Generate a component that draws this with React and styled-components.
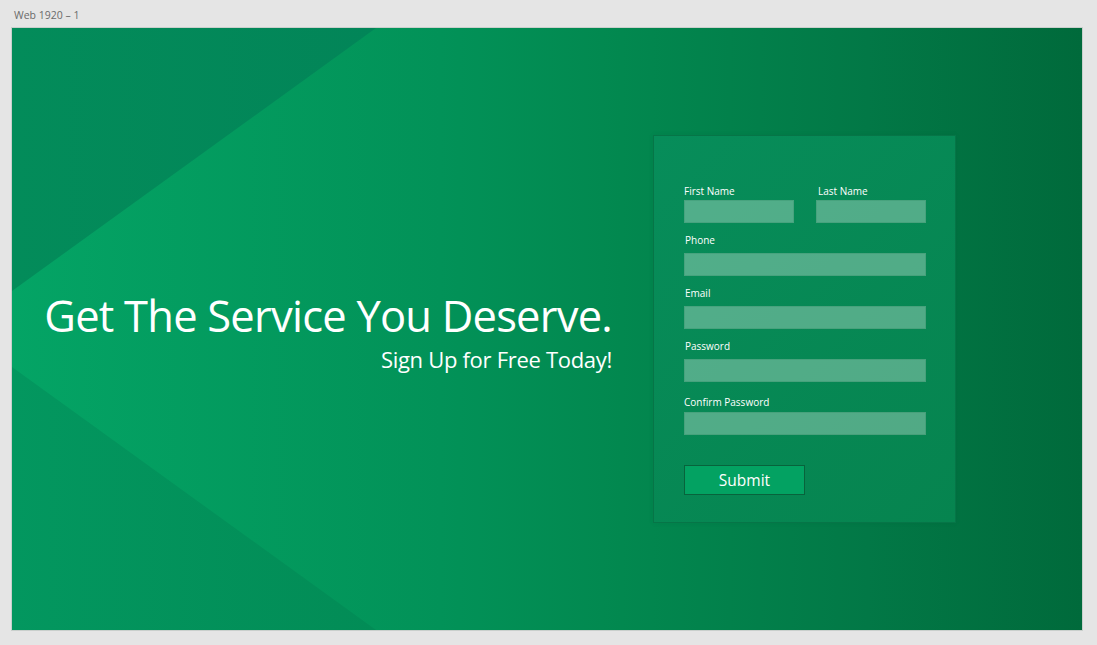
import React from "react";
import styled, { createGlobalStyle } from "styled-components";

const GlobalStyle = createGlobalStyle`
  html, body {
    margin: 0;
    padding: 0;
    background: #e5e5e5;
  }
  body {
    font-family: "Open Sans", "Noto Sans", sans-serif;
  }
`;

const Page = styled.div`
  width: 1097px;
  height: 645px;
  padding: 8px 14px 0 11px;
  box-sizing: border-box;
  display: flex;
  flex-direction: column;
`;

const BoardTitle = styled.div`
  font-size: 10.5px;
  color: #6a6a6a;
  height: 19px;
  padding-left: 3px;
  line-height: 14px;
`;

const Artboard = styled.main`
  position: relative;
  width: 1072px;
  height: 604px;
  box-sizing: border-box;
  border: 1px solid #c9cfcc;
  overflow: hidden;
  display: flex;
  align-items: center;
  background: linear-gradient(
    90deg,
    #04a465 0%,
    #029258 40%,
    #02884f 57%,
    #027846 80%,
    #006a3b 100%
  );

  /* darker wedges in the left corners */
  &::before,
  &::after {
    content: "";
    position: absolute;
    left: 0;
    width: 364px;
    height: 263px;
  }
  &::before {
    top: 0;
    background: linear-gradient(90deg, #038c5a, #028558);
    clip-path: polygon(0 0, 100% 0, 0 100%);
  }
  &::after {
    bottom: 0;
    background: linear-gradient(90deg, #03975f, #028c56);
    clip-path: polygon(0 0, 100% 100%, 0 100%);
  }
`;

const Hero = styled.section`
  position: relative;
  z-index: 1;
  width: 568px;
  margin-left: 32px;
  margin-top: 4px;
  text-align: right;
  color: #ffffff;
`;

const Headline = styled.h1`
  margin: 0;
  font-weight: 400;
  font-size: 43.5px;
  letter-spacing: -0.78px;
  line-height: 56px;
  white-space: nowrap;
`;

const Tagline = styled.p`
  margin: 0;
  font-size: 22px;
  letter-spacing: -0.3px;
  line-height: 31px;
`;

const Card = styled.form`
  position: relative;
  z-index: 1;
  margin-left: 41px;
  width: 303px;
  height: 388px;
  box-sizing: border-box;
  padding: 48px 29px 0 30px;
  background: linear-gradient(135deg, #078d5a 0%, #06844f 100%);
  border: 1px solid #067547;
  box-shadow: 0 0 6px rgba(0, 0, 0, 0.05);
  display: flex;
  flex-direction: column;
`;

const Row = styled.div`
  display: grid;
  grid-template-columns: 1fr 1fr;
  column-gap: 22px;
  margin-bottom: 10px;
`;

const Field = styled.label`
  display: flex;
  flex-direction: column;
  min-width: 0;
  margin-bottom: ${(p) => p.$after ?? 10}px;
`;

const FieldLabel = styled.span`
  font-size: 10px;
  color: #ffffff;
  line-height: 14px;
  margin-bottom: ${(p) => p.$space ?? 6}px;
  padding-left: ${(p) => p.$indent ?? 1}px;
`;

const Input = styled.input`
  width: 100%;
  height: 23px;
  box-sizing: border-box;
  margin: 0;
  border: 1px solid rgba(0, 90, 50, 0.12);
  background: rgba(255, 255, 255, 0.3);
  outline: none;
  padding: 0 6px;
  color: #fff;
  font-family: inherit;
`;

const Submit = styled.button`
  width: 121px;
  height: 30px;
  margin-top: 20px;
  background: #03a262;
  border: 1px solid #08633c;
  color: #ffffff;
  font-family: inherit;
  font-size: 15.5px;
  line-height: 26px;
  padding: 0;
  cursor: pointer;
`;

const fields = [
  { name: "phone", label: "Phone", type: "tel" },
  { name: "email", label: "Email", type: "email" },
  { name: "password", label: "Password", type: "password", after: 13 },
  { name: "confirm", label: "Confirm Password", type: "password", space: 3, indent: 0 },
];

export default function App() {
  return (
    <>
      <GlobalStyle />
      <Page>
        <BoardTitle>Web 1920 – 1</BoardTitle>
        <Artboard>
          <Hero>
            <Headline>Get The Service You Deserve.</Headline>
            <Tagline>Sign Up for Free Today!</Tagline>
          </Hero>
          <Card onSubmit={(e) => e.preventDefault()}>
            <Row>
              <Field $after={0}>
                <FieldLabel $space={2} $indent={0}>First Name</FieldLabel>
                <Input name="firstName" />
              </Field>
              <Field $after={0}>
                <FieldLabel $space={2} $indent={2}>Last Name</FieldLabel>
                <Input name="lastName" />
              </Field>
            </Row>
            {fields.map((f) => (
              <Field key={f.name} $after={f.after}>
                <FieldLabel $space={f.space} $indent={f.indent}>{f.label}</FieldLabel>
                <Input name={f.name} type={f.type} />
              </Field>
            ))}
            <Submit type="submit">Submit</Submit>
          </Card>
        </Artboard>
      </Page>
    </>
  );
}
